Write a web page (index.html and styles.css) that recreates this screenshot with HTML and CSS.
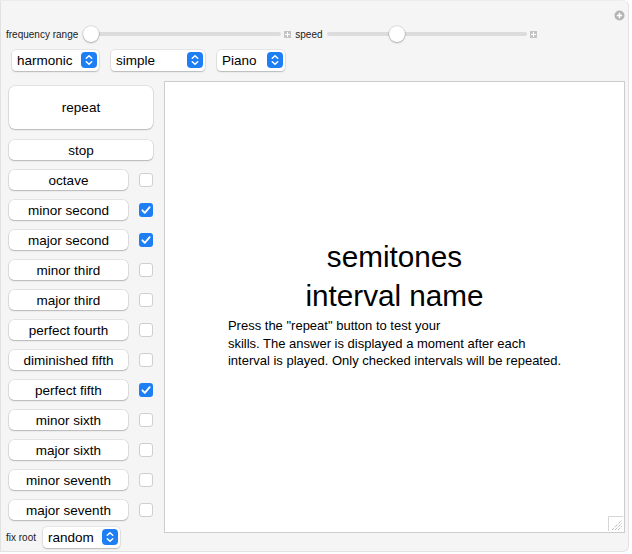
FILE: index.html
```html
<!DOCTYPE html>
<html lang="en">
<head>
  <meta charset="UTF-8">
  <title>Interval Trainer</title>
  <link rel="stylesheet" href="styles.css">
</head>
<body>
  <div class="app">
    <span class="corner-plus">
      <svg width="11" height="11" viewBox="0 0 11 11"><circle cx="5.5" cy="5.5" r="5" fill="#b4b4b4"/><path d="M5.5 2.8v5.4M2.8 5.5h5.4" stroke="#fff" stroke-width="1.6"/></svg>
    </span>

    <div class="slider-row">
      <span class="small-label">frequency range</span>
      <div class="track freq"><span class="thumb" style="left: 0px"></span></div>
      <span class="mini-plus"></span>
      <span class="small-label">speed</span>
      <div class="track speed"><span class="thumb" style="left: 62px"></span></div>
      <span class="mini-plus"></span>
    </div>

    <div class="menu-row">
      <div class="popup w-harmonic">harmonic<span class="stepper"></span></div>
      <div class="popup w-simple">simple<span class="stepper"></span></div>
      <div class="popup w-piano">Piano<span class="stepper"></span></div>
    </div>

    <div class="main">
      <div class="controls">
        <button class="btn big">repeat</button>
        <button class="btn wide">stop</button>
        <div class="interval"><button class="btn">octave</button><span class="check"></span></div>
        <div class="interval"><button class="btn">minor second</button><span class="check on"></span></div>
        <div class="interval"><button class="btn">major second</button><span class="check on"></span></div>
        <div class="interval"><button class="btn">minor third</button><span class="check"></span></div>
        <div class="interval"><button class="btn">major third</button><span class="check"></span></div>
        <div class="interval"><button class="btn">perfect fourth</button><span class="check"></span></div>
        <div class="interval"><button class="btn">diminished fifth</button><span class="check"></span></div>
        <div class="interval"><button class="btn">perfect fifth</button><span class="check on"></span></div>
        <div class="interval"><button class="btn">minor sixth</button><span class="check"></span></div>
        <div class="interval"><button class="btn">major sixth</button><span class="check"></span></div>
        <div class="interval"><button class="btn">minor seventh</button><span class="check"></span></div>
        <div class="interval"><button class="btn">major seventh</button><span class="check"></span></div>
        <div class="root-row">
          <span class="small-label">fix root</span>
          <div class="popup w-random">random<span class="stepper"></span></div>
        </div>
      </div>

      <div class="output">
        <div class="answer">
          <div class="title">semitones</div>
          <div class="title">interval name</div>
          <p class="info">Press the "repeat" button to test your<br> skills. The answer is displayed a moment after each<br>interval is played. Only checked intervals will be repeated.</p>
        </div>
        <span class="grip">
          <svg width="15" height="15" viewBox="0 0 15 15"><path d="M0.5 15V0.5H15" fill="none" stroke="#d6d6d6"/><path d="M4 14L14 4M7 14L14 7M10 14L14 10" stroke="#9a9a9a" stroke-width="1" stroke-dasharray="1 1"/></svg>
        </span>
      </div>
    </div>
  </div>
</body>
</html>
```

FILE: styles.css
```css
body {
  margin: 0;
  background-color: #ffffff;
  font-family: "Liberation Sans", Arial, sans-serif;
  color: #111;
}

.app {
  position: relative;
  width: 629px;
  height: 552px;
  background-color: #f5f5f5;
  border: 1px solid #e2e2e2;
  border-top-color: #ececec;
  border-radius: 0 6px 6px 0;
  box-sizing: border-box;
}

.corner-plus {
  position: absolute;
  top: 9px;
  right: 3px;
  width: 11px;
  height: 11px;
}

.corner-plus svg {
  display: block;
}

.small-label {
  font-size: 10px;
  color: #1a1a1a;
}

.slider-row {
  display: flex;
  align-items: center;
  height: 20px;
  margin-top: 23px;
  padding-left: 5px;
}

.track {
  position: relative;
  height: 4px;
  background-color: #dcdcdc;
  border-radius: 2px;
}

.track.freq {
  width: 198px;
  margin-left: 5px;
}

.track.speed {
  width: 200px;
  margin-left: 4px;
}

.thumb {
  position: absolute;
  top: -6px;
  width: 16px;
  height: 16px;
  border-radius: 50%;
  background-color: #ffffff;
  box-shadow: 0 0 0 0.5px rgba(0, 0, 0, 0.18), 0 1px 2px rgba(0, 0, 0, 0.25);
}

.mini-plus {
  position: relative;
  width: 7px;
  height: 7px;
  margin: 0 4px 0 3px;
  background-color: #c4c4c4;
}

.mini-plus::before,
.mini-plus::after {
  content: "";
  position: absolute;
  background-color: #ffffff;
}

.mini-plus::before {
  left: 3px;
  top: 1px;
  width: 1px;
  height: 5px;
}

.mini-plus::after {
  left: 1px;
  top: 3px;
  width: 5px;
  height: 1px;
}

.menu-row {
  display: flex;
  gap: 12px;
  margin-top: 6px;
  padding-left: 11px;
}

.popup {
  position: relative;
  height: 21px;
  line-height: 21px;
  padding-left: 5px;
  box-sizing: border-box;
  font-size: 13.5px;
  color: #000;
  background-color: #ffffff;
  border-radius: 4px;
  box-shadow: 0 0 0 0.5px rgba(0, 0, 0, 0.12), 0 1px 1.5px rgba(0, 0, 0, 0.2);
}

.w-harmonic { width: 87px; }
.w-simple { width: 94px; }
.w-piano { width: 68px; }
.w-random { width: 77px; }

.stepper {
  position: absolute;
  top: 2px;
  right: 2px;
  width: 16px;
  height: 16px;
  border-radius: 4px;
  background-color: #1e7ff5;
  background-image: url("data:image/svg+xml,%3Csvg xmlns='http://www.w3.org/2000/svg' width='16' height='16'%3E%3Cpath d='M5.3 6.3L8 3.8l2.7 2.5M5.3 9.7L8 12.2l2.7-2.5' fill='none' stroke='white' stroke-width='1.5' stroke-linecap='round' stroke-linejoin='round'/%3E%3C/svg%3E");
}

.main {
  display: flex;
  margin-top: 10px;
}

.controls {
  display: flex;
  flex-direction: column;
  width: 144px;
  padding: 5px 0 0 8px;
}

.btn {
  display: block;
  height: 20px;
  padding: 0;
  font-family: "Liberation Sans", Arial, sans-serif;
  font-size: 13.5px;
  color: #000;
  background-color: #ffffff;
  border: none;
  border-radius: 5px;
  box-shadow: 0 0 0 0.5px rgba(0, 0, 0, 0.14), 0 1px 1.5px rgba(0, 0, 0, 0.2);
}

.btn.big {
  width: 144px;
  height: 43px;
  border-radius: 6px;
}

.btn.wide {
  width: 144px;
  margin-top: 11px;
}

.interval {
  display: flex;
  align-items: center;
  margin-top: 10px;
}

.interval .btn {
  width: 119px;
}

.check {
  width: 14px;
  height: 14px;
  margin-left: 11px;
  box-sizing: border-box;
  background-color: #ffffff;
  border: 1px solid #cfcfcf;
  border-radius: 3px;
}

.check.on {
  border: none;
  background-color: #1e7ff5;
  background-image: url("data:image/svg+xml,%3Csvg xmlns='http://www.w3.org/2000/svg' width='14' height='14'%3E%3Cpath d='M3.4 7.3l2.4 2.5 4.9-5.6' fill='none' stroke='white' stroke-width='1.8' stroke-linecap='round' stroke-linejoin='round'/%3E%3C/svg%3E");
}

.root-row {
  display: flex;
  align-items: center;
  gap: 7px;
  margin-top: 7px;
  margin-left: -3px;
}

.output {
  position: relative;
  width: 461px;
  height: 452px;
  margin-left: 11px;
  background-color: #ffffff;
  border: 1px solid #cdcdcd;
  box-sizing: border-box;
}

.answer {
  display: flex;
  flex-direction: column;
  align-items: center;
  padding-top: 155px;
  color: #000;
}

.title {
  font-size: 29.7px;
  line-height: 39px;
}

.info {
  margin: 2px 0 0;
  font-size: 13px;
  line-height: 17.5px;
}

.grip {
  position: absolute;
  right: 1px;
  bottom: 1px;
  width: 15px;
  height: 15px;
}

.grip svg {
  display: block;
}
```
